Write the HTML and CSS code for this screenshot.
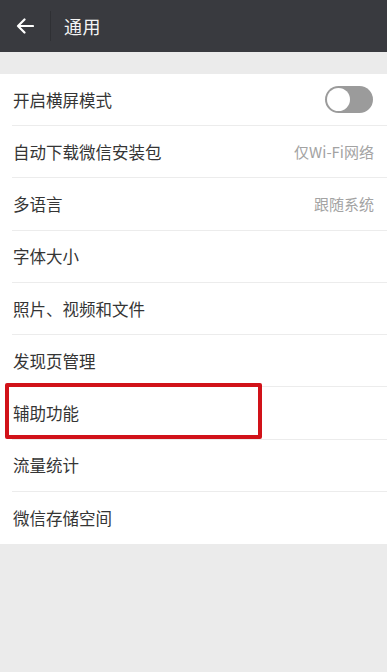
FILE: index.html
```html
<!DOCTYPE html>
<html lang="zh">
<head>
<meta charset="utf-8">
<link rel="stylesheet" href="styles.css">
</head>
<body>
<div class="header">
  <div class="back">
    <svg width="18" height="16" viewBox="0 0 18 16"><path d="M17 8H2M8.5 1.5L2 8l6.5 6.5" fill="none" stroke="#fff" stroke-width="2.2" stroke-linecap="round" stroke-linejoin="round"/></svg>
  </div>
  <div class="vline"></div>
  <div class="title">通用</div>
</div>
<div class="gap"></div>
<div class="list">
  <div class="row"><span class="label">开启横屏模式</span><span class="toggle"><span class="knob"></span></span></div>
  <div class="row"><span class="label">自动下载微信安装包</span><span class="value">仅Wi-Fi网络</span></div>
  <div class="row"><span class="label">多语言</span><span class="value">跟随系统</span></div>
  <div class="row"><span class="label">字体大小</span></div>
  <div class="row"><span class="label">照片、视频和文件</span></div>
  <div class="row"><span class="label">发现页管理</span></div>
  <div class="row hl"><span class="label">辅助功能</span><span class="mark"></span></div>
  <div class="row"><span class="label">流量统计</span></div>
  <div class="row last"><span class="label">微信存储空间</span></div>
</div>
</body>
</html>
```
FILE: styles.css
```css
html, body { margin: 0; padding: 0; }
body {
  background: #ebebeb;
  font-family: "Noto Sans CJK SC", "Noto Sans", sans-serif;
  width: 387px;
  height: 672px;
  overflow: hidden;
}
.header {
  height: 52px;
  background: #393a3f;
  display: flex;
  align-items: center;
}
.back {
  width: 50px;
  display: flex;
  justify-content: center;
}
.back svg { margin-left: -1px; }
.vline {
  width: 1px;
  height: 30px;
  background: #2f3034;
}
.title {
  color: #f4f4f4;
  font-size: 18px;
  margin-left: 13px;
  letter-spacing: 0.5px;
}
.gap { height: 22px; }
.list {
  background: #fff;
  padding-left: 12px;
}
.row {
  position: relative;
  height: 52.3px;
  display: flex;
  align-items: center;
  justify-content: space-between;
  padding-right: 13px;
  border-bottom: 1px solid #ececec;
  box-sizing: border-box;
}
.row:first-child { height: 52px; }
.row.last { border-bottom: none; height: 52px; }
.label {
  font-size: 16.5px;
  color: #353535;
  margin-left: 1px;
}
.value {
  font-size: 15px;
  color: #a3a3a3;
}
.toggle {
  width: 48px;
  height: 27px;
  border-radius: 14px;
  background: #9b9b9b;
  position: relative;
  margin-right: 1px;
}
.knob {
  position: absolute;
  left: 2px;
  top: 2px;
  width: 23px;
  height: 23px;
  border-radius: 50%;
  background: #fff;
}
.mark {
  position: absolute;
  left: -7px;
  top: -4px;
  width: 257px;
  height: 56px;
  border: 4px solid #d11219;
  border-radius: 2px;
  box-sizing: border-box;
}
```
